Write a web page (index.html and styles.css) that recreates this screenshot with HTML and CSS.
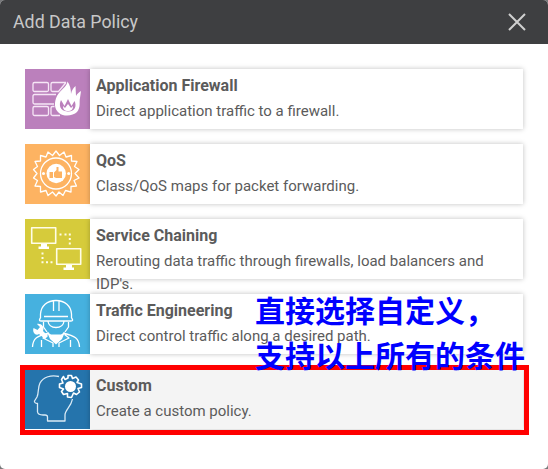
FILE: index.html
```html
<!DOCTYPE html>
<html lang="en">
<head>
<meta charset="utf-8">
<title>Add Data Policy</title>
<link rel="stylesheet" href="styles.css">
</head>
<body>
<div class="dialog">
  <header class="header">
    <h1 class="title"><span>Add Data Policy</span></h1>
    <svg class="close" width="18" height="18" viewBox="0 0 18 18"><path d="M1 1L17 17M17 1L1 17"/></svg>
  </header>
  <main class="list">
    <section class="card">
      <div class="icon firewall">
        <svg width="65" height="60" viewBox="0 0 65 60">
          <g class="thin">
            <rect x="8" y="13.5" width="15.5" height="9" rx="1.5"/>
            <path d="M41 13.500H27.500Q26 13.500 26 15V21Q26 22.500 27.500 22.500H33.500L41 13.500"/>
            <path d="M31 25.500H9.500Q8 25.500 8 27V33.500Q8 35 9.500 35H29"/>
            <rect x="8" y="37.500" width="15.500" height="9" rx="1.500"/>
            <path d="M29.500 37.500H27.500Q26 37.500 26 39V45Q26 46.500 27.500 46.500H35"/>
          </g>
          <path class="solid" d="M42.500 12.500C42 18 35 21 32 27C29 33 29 40 34 44C39 48 48 47 52 43C56 38 54 33 55 29L56 22C54 23 52 25 51 27L50.500 17C48 19 46.500 22 46 25C46 20 45 16 42.500 12.500Z"/>
          <path class="flame-cut" d="M36 31C33.500 36 35 42 42.500 42.500C50 43 52 37 49.500 32L46.500 37L43 30L39.500 37Z"/>
          <path class="solid" d="M38 37L40 39L43 35L46 39L48 37C48 41 46 42 43 42S38 41 38 37Z"/>
        </svg>
      </div>
      <div class="text"><h2>Application Firewall</h2><p>Direct application traffic to a firewall.</p></div>
    </section>
    <section class="card">
      <div class="icon qos">
        <svg width="65" height="60" viewBox="0 0 65 60">
          <path class="line" d="M31 7L34.500 11.500L39 8L41 13L46.500 11.500L46.500 17L52 17.500L49.500 22.500L54 25.500L50 29.500L54 34L49 36.500L51.500 42L46 42.500L46 48L40.500 46.500L38 51.500L34 48L31 52L27.500 48L23 51.500L21 46.500L15.500 48L15.500 42.500L10 42L12.500 36.500L8.500 34L12 29.500L8.500 25.500L12.500 22.500L10 17.500L15.500 17L15.500 11.500L21 13L23 8L27.500 11.500Z"/>
          <circle class="line" cx="31" cy="29.500" r="15.500"/>
          <circle class="solid" cx="31.200" cy="29.500" r="9.700"/>
          <circle class="solid" cx="18.500" cy="29.500" r="1.500"/><circle class="solid" cx="43.700" cy="29.500" r="1.500"/>
          <path class="thumb" d="M24.500 28H28V34H24.500ZM29 28.500L31.500 26V23H33.500V27.500H37V34H31L29 33Z"/>
        </svg>
      </div>
      <div class="text"><h2>QoS</h2><p>Class/QoS maps for packet forwarding.</p></div>
    </section>
    <section class="card">
      <div class="icon chain">
        <svg width="65" height="60" viewBox="0 0 65 60">
          <g class="monitor"><rect x="6.700" y="8.700" width="24" height="15.600"/><rect x="31.700" y="29.700" width="24" height="15.600"/></g>
          <path class="solid" d="M16 25H22V27.500H24V30H13.500V27.500H16ZM41 46H47V48.500H49V51H38.500V48.500H41Z"/>
          <path class="dots" d="M34.500 15.500h2M39.500 15.500h2M43.800 15.500h2M43.800 20h2M43.800 24.500h2M16.500 34.500h2M16.500 39h2M16.500 43.300h2M21 43.300h2M25.500 43.300h2"/>
        </svg>
      </div>
      <div class="text"><h2>Service Chaining</h2><p>Rerouting data traffic through firewalls, load balancers and IDP's.</p></div>
    </section>
    <section class="card">
      <div class="icon engineer">
        <svg width="65" height="60" viewBox="0 0 65 60">
          <g class="line">
            <path d="M15.500 24V20C16 12 22 6.500 31 6.500S46 12 46.500 20V24M28.500 17V7.500M34 17V7.500"/>
            <path d="M15.500 24Q13 27 16.500 27H46Q49 27 46.500 24M19 22.500H43M23 27.500Q24 33.500 31 33.500T39 27.500M18.500 28V33L22 38M43.500 28V33L40 38"/>
            <path d="M7.500 53C8 44 12 42 24 39M54.500 53C54 44 50 42 38 39M16.500 53V46M45.500 53V46M23 40L18 44L28 49V53M39 40L44 44L34 49V53"/>
          </g>
          <path class="solid" d="M22 38L26 40.500H36L40 38L37 45L31 50.500L25 45Z"/>
          <path class="solid" d="M12 30L15 33L12.500 36L8.500 34C7 39 11 42 14 40L20 45L23 42L18 37C20 33 16 29 12 30Z"/>
        </svg>
      </div>
      <div class="text"><h2>Traffic Engineering</h2><p>Direct control traffic along a desired path.</p></div>
    </section>
    <section class="card selected">
      <div class="icon custom">
        <svg width="65" height="60" viewBox="0 0 65 60">
          <path class="head" d="M34 7.500C26 5.500 18.500 8 15 14C12.500 19 14 24 12 28L9.500 32Q9 34 12.500 34.500V43Q13 46 18 46H20Q22.500 46 22.500 48V52H40V46C40 41 46 38 47.500 30"/>
          <path class="gear" d="M38.500 7.500L40 10.500L43 9V6.500H46.500L47.500 9.500L51 8L53.500 11L52 13.500L56.500 15V18.500L53 19.500L54.500 23L51.500 25.500L48.500 24L46.500 28.500L42.500 28L42.500 24.500L38.500 25.500L36.500 22.500L38.500 20L34.500 18.500V15L38 14L36.500 10.500Z"/>
          <circle class="solid" cx="45.500" cy="17.500" r="5.500"/>
        </svg>
      </div>
      <div class="text"><h2>Custom</h2><p>Create a custom policy.</p></div>
    </section>
  </main>
  <div class="frame"></div>
  <div class="note" lang="zh-CN">直接选择自定义，<br>支持以上所有的条件</div>
</div>
</body>
</html>
```

FILE: styles.css
```css
* { box-sizing: border-box; }
body { margin: 0; background: #77787a; font-family: Roboto, "Noto Sans CJK SC", sans-serif; }
.dialog { position: relative; width: 548px; height: 469px; background: #fff; border-radius: 5px; overflow: hidden; }
.header { height: 44px; padding: 0 22px 1px 13px; display: flex; align-items: center; justify-content: space-between; background: #3e3f41; }
.title { margin: 0; font-size: 17.8px; line-height: 43px; font-weight: 400; color: #c8c8c8; }
.close { fill: none; stroke: #d0d0d0; stroke-width: 2; }
.list { padding: 25px 25px 0; display: flex; flex-direction: column; gap: 15px; }
.card { display: flex; height: 60px; background: #fff; }
.selected { background: #f4f4f4; }
.icon { flex: none; width: 65px; height: 60px; }
.icon svg { display: block; fill: none; stroke-linejoin: round; }
.firewall { background: #bb80bc; }
.qos { background: #fdb362; }
.chain { background: #d6cb3b; }
.engineer { background: #46b1df; }
.custom { background: #2574ac; }
.text { flex: 1; padding: 4px 6px 0; color: #5b5b5b; box-shadow: 0 0 5px rgba(0, 0, 0, .25); }
.text h2 { margin: 0; font-size: 16px; line-height: 25px; font-weight: 700; }
.text p { margin: 2px 0 0; font-size: 15px; line-height: 23px; }
.line { stroke: #fff; stroke-width: 1.3; }
.thin { stroke: #f6e6f6; stroke-width: 1.3; }
.solid { fill: #fff; }
.flame-cut { fill: #bb80bc; }
.thumb { fill: #fdb362; }
.monitor { stroke: #fffde8; stroke-width: 1.6; }
.dots { stroke: #fffde8; stroke-width: 2; }
.head { stroke: #d9eaf5; stroke-width: 1.3; }
.gear { stroke: #fff; stroke-width: 1.6; }
.frame { position: absolute; left: 20px; top: 365px; width: 509px; height: 70px; border: 5px solid #f00; }
.note { position: absolute; left: 255px; top: 287px; font: 700 30px/45px "Noto Sans CJK SC", sans-serif; color: #00f; white-space: nowrap; }
```
